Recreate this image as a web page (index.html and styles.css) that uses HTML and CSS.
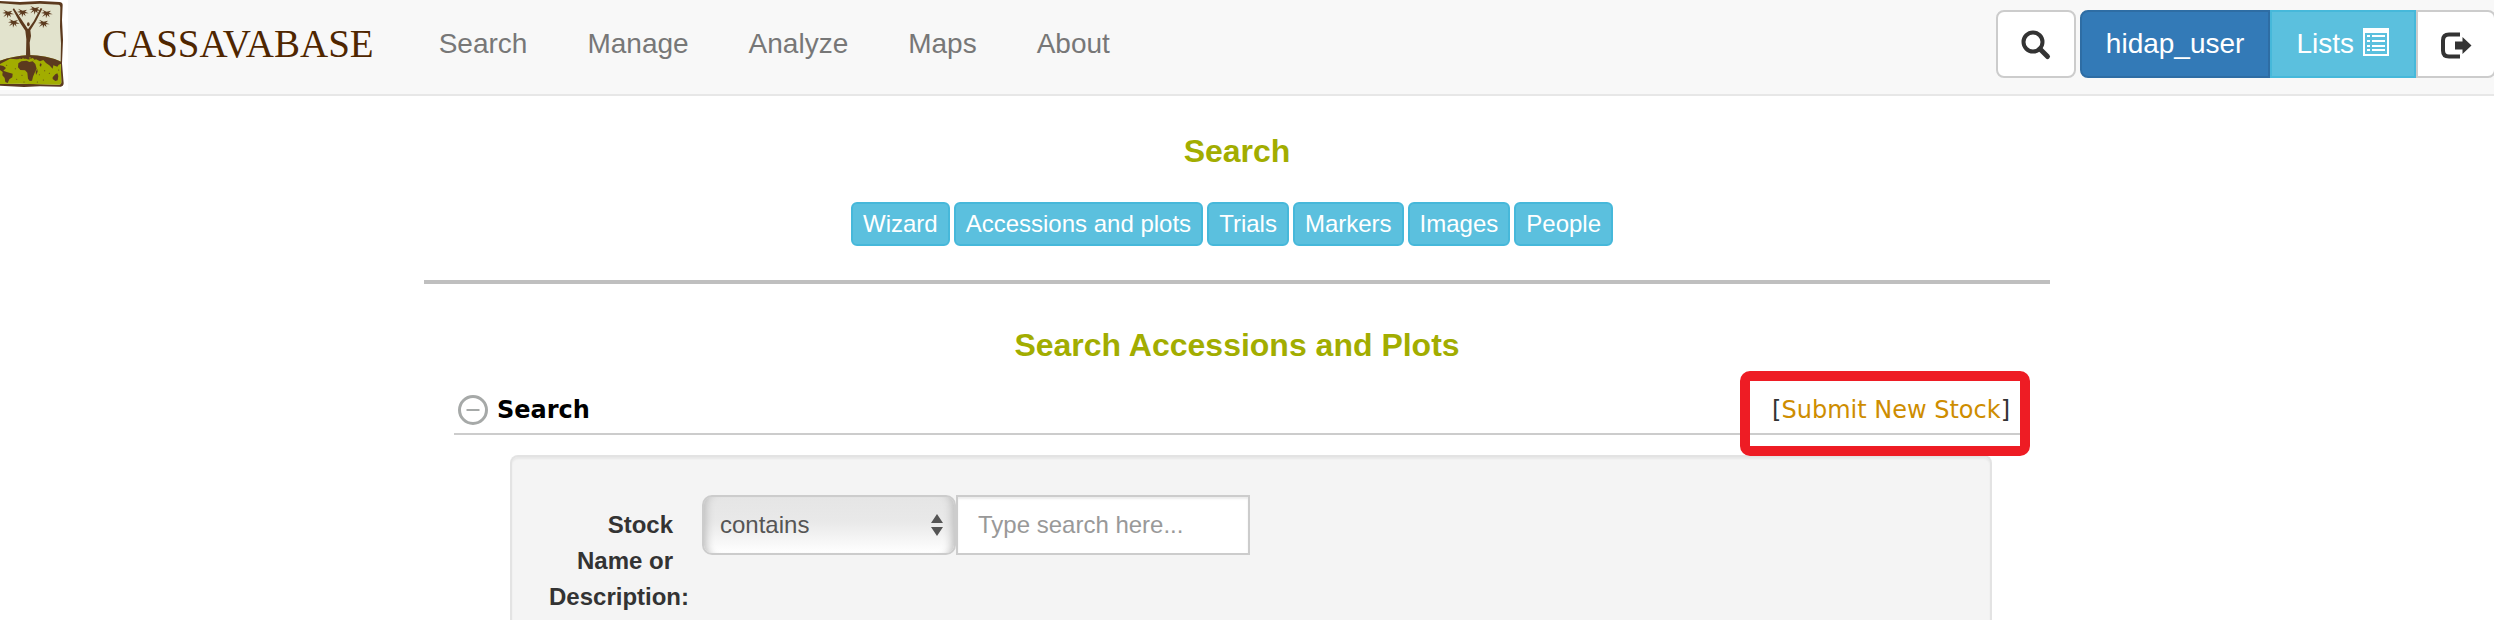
FILE: index.html
```html
<!DOCTYPE html>
<html lang="en">
<head>
<meta charset="utf-8">
<title>Cassavabase</title>
<link rel="stylesheet" href="styles.css">
</head>
<body>
<header class="navbar">
  <a class="brand-logo" href="#" aria-label="Cassavabase home">
    <svg viewBox="0 0 204 270" width="68" height="90" aria-hidden="true">
      <rect width="204" height="270" fill="#fff"/>
      <path d="M0 3 L60 6 L120 3 L178 6 Q187 6 188 14 L186 60 L189 120 L186 190 L191 250 Q190 260 182 260 L120 259 L72 261 L0 257Z" fill="#5c3a1e"/>
      <path d="M0 10 L60 14 L120 11 L176 14 Q181 15 181 22 L180 80 L183 130 L182 186 L184 246 Q184 254 176 254 L100 252 L0 251Z" fill="#e2e3cd"/>
      <path d="M0 182 Q40 168 86 166 Q140 166 182 184 L184 246 Q184 254 176 254 L60 251 L0 252Z" fill="#a2ad00"/>
      <path d="M0 182 Q40 168 86 165 Q140 165 183 185 L183 192 Q176 191 172 200 L160 196 L158 206 L148 196 L138 189 L130 180 L120 184 L108 178 L98 182 L76 176 L50 178 L30 176 L0 192Z" fill="#5c3a1e"/>
      <g fill="#a2ad00"><circle cx="60" cy="178" r="2.5"/><circle cx="69" cy="175" r="2"/><circle cx="78" cy="179" r="3"/><circle cx="90" cy="174" r="2.5"/><circle cx="99" cy="179" r="2.5"/><path d="M50 181l12-4 6 5-8 4zM84 180l14-6 6 5-10 6z"/></g>
      <path d="M55 190 L64 184 L80 182 L88 186 L98 184 L106 192 L110 206 L104 218 L99 230 L96 242 L89 243 L84 236 L82 218 L75 211 L61 210 L54 202Z" fill="#5c3a1e"/>
      <path d="M0 196 L10 198 L18 204 L10 212 L20 216 L38 221 L37 232 L28 238 L23 249 L16 246 L14 234 L7 226 L8 216 L0 210Z" fill="#5c3a1e"/>
      <path d="M107 215l5-8 1 8-5 10zM158 232l8-9 6-3 3 8-2 13-7 2-8-6zM120 190l5 2-2 8-4-3z" fill="#5c3a1e"/>
      <path d="M78 167 L79 118 L76 92 L60 68 L38 28 L42 25 L66 61 L84 88 L101 64 L122 24 L127 26 L108 64 L91 91 L93 108 L89 128 L91 167Z" fill="#5c3a1e"/>
      <ellipse cx="85" cy="73" rx="4" ry="6" fill="#5c3a1e"/>
      <g fill="#5c3a1e">
        <path id="leaf" d="M24 35 L10 29 L17 36 L7 39 L18 41 L10 51 L21 44 L22 55 L26 45 L33 52 L30 43 L42 43 L31 38 L37 32Z"/>
        <use href="#leaf" x="17" y="28"/>
        <use href="#leaf" x="44" y="-3"/>
        <use href="#leaf" x="81" y="-11"/>
        <use href="#leaf" x="116" y="0"/>
        <use href="#leaf" x="107" y="30"/>
      </g>
      <g fill="#5c3a1e"><circle cx="20" cy="196" r="1.5"/><circle cx="46" cy="206" r="1.5"/><circle cx="50" cy="238" r="1.5"/><circle cx="66" cy="226" r="1.5"/><circle cx="72" cy="246" r="1.5"/><circle cx="118" cy="224" r="1.5"/><circle cx="134" cy="212" r="1.5"/><circle cx="148" cy="220" r="1.5"/><circle cx="130" cy="240" r="1.5"/><circle cx="112" cy="246" r="1.5"/><circle cx="176" cy="210" r="1.5"/></g>
    </svg>
  </a>
  <a class="brand-name" href="#">CASSAVABASE</a>
  <nav class="menu">
    <a href="#">Search</a>
    <a href="#">Manage</a>
    <a href="#">Analyze</a>
    <a href="#">Maps</a>
    <a href="#">About</a>
  </nav>
  <div class="tools">
    <button class="btn btn-default" type="button" aria-label="Search">
      <svg class="icon" viewBox="0 0 28 28" aria-hidden="true"><circle cx="11" cy="12" r="9.5" fill="none" stroke="currentColor" stroke-width="4"/><path d="M18 19 L25.500 26.500" stroke="currentColor" stroke-width="5" stroke-linecap="round"/></svg>
    </button>
    <div class="btn-group">
      <button class="btn btn-primary" type="button">hidap_user</button>
      <button class="btn btn-info" type="button">Lists
        <svg class="icon" viewBox="0 0 28 28" aria-hidden="true"><path fill="currentColor" fill-rule="evenodd" d="M1 0H27V28H1ZM3 5V26H25V5ZM5 7h3v2H5zM10 7h13v2H10zM5 12h3v2H5zM10 12h13v2H10zM5 17h3v2H5zM10 17h13v2H10zM5 21h3v2H5zM10 21h13v2H10z"/></svg>
      </button>
      <button class="btn btn-default" type="button" aria-label="Log out">
        <svg class="icon" viewBox="0 0 28 28" aria-hidden="true"><path d="M18 4.500H7Q1 4.500 1 10.500V20.500Q1 26.500 7 26.500H18" fill="none" stroke="currentColor" stroke-width="4"/><path fill="currentColor" d="M13 11.500H20.500V7L29.500 15.500L20.500 24V19.500H13Z"/></svg>
      </button>
    </div>
  </div>
</header>
<main class="page">
  <h1 class="heading">Search</h1>
  <div class="tabs">
    <a class="tab" href="#">Wizard</a>
    <a class="tab" href="#">Accessions and plots</a>
    <a class="tab" href="#">Trials</a>
    <a class="tab" href="#">Markers</a>
    <a class="tab" href="#">Images</a>
    <a class="tab" href="#">People</a>
  </div>
  <hr class="rule">
  <h2 class="heading">Search Accessions and Plots</h2>
  <section class="section">
    <div class="section-head">
      <button class="toggle" type="button">
        <svg viewBox="0 0 30 30" width="30" height="30" aria-hidden="true"><circle cx="15" cy="15" r="13.500" fill="none" stroke="#a6a9a8" stroke-width="3"/><path d="M8.500 15H21.500" stroke="#a6a9a8" stroke-width="2"/></svg>
        Search
      </button>
      <div class="action">[<a href="#">Submit New Stock</a>]</div>
    </div>
    <form class="panel">
      <label class="label" for="stock">Stock Name or Description:</label>
      <div class="field">
        <select class="match" aria-label="Match type">
          <option>contains</option>
          <option>starts with</option>
        </select>
        <svg class="arrows" viewBox="0 0 12 22" width="12" height="22" aria-hidden="true"><path d="M0 9L6 0L12 9ZM0 13H12L6 22Z" fill="#555"/></svg>
      </div>
      <input class="query" id="stock" type="text" placeholder="Type search here...">
    </form>
  </section>
</main>
</body>
</html>
```
FILE: styles.css
```css
* {
  box-sizing: border-box;
}

body {
  display: flex;
  flex-direction: column;
  min-height: 100vh;
  margin: 0;
  background: #fff;
  color: #333;
  font: 28px/40px "Liberation Sans", Arial, sans-serif;
}

button, input, select {
  margin: 0;
  font-family: inherit;
}

a {
  text-decoration: none;
}

.navbar {
  display: flex;
  align-items: flex-start;
  height: 96px;
  overflow: hidden;
  background: #f8f8f8;
  border-bottom: 2px solid #e7e7e7;
}

.brand-logo svg {
  display: block;
}

.brand-name {
  margin-left: 34px;
  padding-top: 24px;
  color: #4f2600;
  font: 39px/40px "Liberation Serif", serif;
}

.menu {
  display: flex;
  flex: 1;
  margin-left: 35px;
  padding-top: 24px;
}

.menu a {
  padding: 0 30px;
  color: #777;
}

.tools {
  display: flex;
  gap: 4px;
  margin-right: -2px;
  padding-top: 10px;
}

.btn-group {
  display: flex;
}

.btn {
  display: flex;
  align-items: center;
  gap: 8px;
  padding: 12px 24px;
  border: 2px solid #ccc;
  border-radius: 8px;
  font-size: 28px;
  line-height: 40px;
}

.btn-group .btn {
  border-radius: 0;
}

.btn-group .btn:first-child {
  border-radius: 8px 0 0 8px;
}

.btn-group .btn:last-child {
  border-radius: 0 8px 8px 0;
}

.btn-default {
  background: #fff;
  color: #333;
}

.btn-primary {
  background: #337ab7;
  border-color: #2e6da4;
  color: #fff;
}

.btn-info {
  background: #5bc0de;
  border-color: #46b8da;
  color: #fff;
}

.icon {
  width: 28px;
  height: 28px;
  overflow: visible;
}

.btn-info .icon {
  margin-bottom: 4px;
}

.page {
  display: flex;
  flex: 1;
  flex-direction: column;
  width: 100%;
  max-width: 1646px;
  margin: 0 auto;
  padding-right: 20px;
}

.heading {
  margin: 0;
  color: #a2ad00;
  font-size: 32px;
  line-height: 36px;
  text-align: center;
}

h1.heading {
  padding-top: 37px;
}

.tabs {
  display: flex;
  justify-content: center;
  gap: 4px;
  margin: 33px 10px 34px 0;
}

.tab {
  padding: 2px 10px;
  background: #5bc0de;
  border: 2px solid #46b8da;
  border-radius: 6px;
  color: #fff;
  font-size: 24px;
  line-height: 36px;
}

.rule {
  width: 100%;
  height: 4px;
  margin: 0 0 43px;
  background: #bfbfbf;
  border: 0;
}

.section {
  display: flex;
  flex: 1;
  flex-direction: column;
  margin: 26px 30px 0;
}

.section-head {
  display: flex;
  align-items: center;
  justify-content: space-between;
  padding: 3px 10px 5px 4px;
  border-bottom: 2px solid #ccc;
  font: 24px/36px "DejaVu Sans", Verdana, sans-serif;
}

.toggle {
  display: flex;
  align-items: center;
  gap: 9px;
  padding: 0;
  background: none;
  border: 0;
  color: #000;
  font: bold 24px/36px "DejaVu Sans", Verdana, sans-serif;
}

.action {
  position: relative;
}

/* Highlight frame drawn over the link */
.action::after {
  position: absolute;
  inset: -21px -20px -28px -32px;
  border: 10px solid #ee1c24;
  border-radius: 10px;
  content: "";
  pointer-events: none;
}

.action a {
  color: #ce8d00;
}

.panel {
  display: flex;
  flex: 1;
  align-items: flex-start;
  margin: 20px 28px 0 56px;
  padding: 38px 38px 0 37px;
  background: #f4f4f4;
  border: 2px solid #e3e3e3;
  border-bottom: 0;
  border-radius: 8px 8px 0 0;
  box-shadow: inset 0 2px 2px rgba(0, 0, 0, 0.05);
}

.label {
  width: 124px;
  margin-right: 29px;
  padding-top: 12px;
  font-size: 24px;
  font-weight: bold;
  line-height: 36px;
  text-align: right;
}

.field {
  position: relative;
}

.match {
  display: block;
  width: 254px;
  height: 60px;
  padding: 0 16px 2px;
  appearance: none;
  background: linear-gradient(#e5e5e5, #e9e9e9 45%, #fff);
  border: 2px solid #ccc;
  border-radius: 10px;
  box-shadow: inset 10px 0 8px -8px #bbb, inset -10px 0 8px -8px #bbb;
  color: #555;
  font-size: 24px;
}

.arrows {
  position: absolute;
  top: 19px;
  right: 13px;
  pointer-events: none;
}

.query {
  width: 294px;
  height: 60px;
  padding: 0 20px;
  background: #fff;
  border: 2px solid #ccc;
  border-radius: 0;
  box-shadow: inset 0 2px 2px rgba(0, 0, 0, 0.08);
  color: #555;
  font-size: 24px;
}

.query::placeholder {
  color: #999;
}
```
